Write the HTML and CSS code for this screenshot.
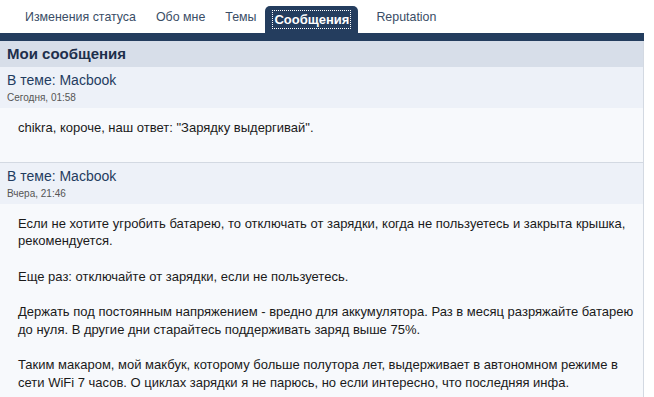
FILE: index.html
```html
<!DOCTYPE html>
<html lang="ru">
<head>
  <meta charset="UTF-8" />
  <title>Мои сообщения</title>
  <link rel="stylesheet" href="styles.css">
</head>
<body>
<div class="page">
  <ul class="tabs">
    <li class="tab">Изменения статуса</li>
    <li class="tab">Обо мне</li>
    <li class="tab">Темы</li>
    <li class="tab active"><span class="focus">Сообщения</span></li>
    <li class="tab">Reputation</li>
  </ul>
  <div class="tabs-line"></div>

  <div class="box">
    <h2 class="box-title">Мои сообщения</h2>

    <div class="post">
      <div class="post-head">
        <div class="post-topic">В теме: Macbook</div>
        <div class="post-date">Сегодня, 01:58</div>
      </div>
      <div class="post-body first">
        <p>chikra, короче, наш ответ: "Зарядку выдергивай".</p>
      </div>
    </div>

    <div class="post">
      <div class="post-head">
        <div class="post-topic">В теме: Macbook</div>
        <div class="post-date">Вчера, 21:46</div>
      </div>
      <div class="post-body">
        <p>Если не хотите угробить батарею, то отключать от зарядки, когда не пользуетесь и закрыта крышка, рекомендуется.</p>
        <p>Еще раз: отключайте от зарядки, если не пользуетесь.</p>
        <p>Держать под постоянным напряжением - вредно для аккумулятора. Раз в месяц разряжайте батарею до нуля. В другие дни старайтесь поддерживать заряд выше 75%.</p>
        <p>Таким макаром, мой макбук, которому больше полутора лет, выдерживает в автономном режиме в сети WiFi 7 часов. О циклах зарядки я не парюсь, но если интересно, что последняя инфа.</p>
      </div>
    </div>
  </div>
</div>
</body>
</html>
```

FILE: styles.css
```css
body {
  margin: 0;
  background: #fff;
  font-family: "Liberation Sans", Arial, sans-serif;
  color: #222;
}

.page {
  width: 644px;
}

/* tab strip */
.tabs {
  list-style: none;
  margin: 0;
  padding: 6px 0 0 15px;
  height: 27px;
  display: flex;
  align-items: flex-start;
}

.tab {
  padding: 0 10px;
  height: 22px;
  line-height: 22px;
  font-size: 12.4px;
  color: #3a4d66;
}

.tab.active {
  height: 27px;
  line-height: 27px;
  padding: 0 9px;
  margin: 0 8px 0 -1px;
  background: #243d5e;
  border-radius: 5px 5px 0 0;
  color: #fff;
  font-size: 13px;
  font-weight: bold;
}

.tab.active .focus {
  outline: 1px dotted #fff;
  outline-offset: 1px;
}

.tabs-line {
  height: 8px;
  background: #243d5e;
}

/* messages box */
.box {
  border-right: 1px solid #d3d9e2;
}

.box-title {
  margin: 0;
  height: 26px;
  line-height: 25px;
  padding: 0 7px;
  background: #d7dee9;
  font-size: 15px;
  font-weight: bold;
  color: #1d2f4b;
}

.post-head {
  background: #edf1f8;
  padding: 5px 7px 0;
  height: 36px;
}

.post-topic {
  font-size: 14px;
  line-height: 17px;
  color: #1f3c60;
}

.post-date {
  font-size: 10px;
  line-height: 14px;
  margin-top: 2px;
  color: #555;
}

.post-body {
  background: #f7f9fc;
  padding: 11px 4px 8px 18px;
  font-size: 13px;
  line-height: 17.7px;
  color: #1a1a1a;
}

.post-body.first {
  padding-bottom: 25px;
  border-bottom: 1px solid #d3d9e2;
}

.post-body p {
  margin: 0 0 17.7px;
}

.post-body p:last-child {
  margin-bottom: 0;
}
```
